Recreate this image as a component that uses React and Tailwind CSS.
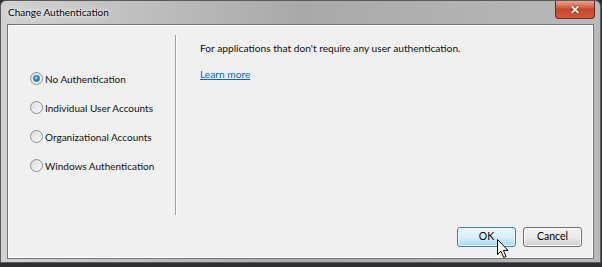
import React from 'react';

const options = [
  'No Authentication',
  'Individual User Accounts',
  'Organizational Accounts',
  'Windows Authentication',
];

const Radio = ({ checked }) => (
  <span className="flex items-center justify-center w-[13px] h-[13px] rounded-full border border-[#8e8f8f] bg-gradient-to-br from-[#dcdcdc] to-[#fbfbfb] shrink-0">
    {checked && (
      <span className="w-[7px] h-[7px] rounded-full bg-[radial-gradient(circle_at_40%_35%,#9fe0ff,#1b8bd4_55%,#0c5a9a)] border border-[#2a6e9f]" />
    )}
  </span>
);

const Cursor = () => (
  <svg width="13" height="20" viewBox="0 0 13 20" className="absolute left-[497px] top-[239px]">
    <path d="M0.5 0.5 L0.5 15.5 L4 12.2 L6.6 18.5 L9 17.5 L6.4 11.4 L11 11.4 Z" fill="#fff" stroke="#000" strokeWidth="1" strokeLinejoin="miter" />
  </svg>
);

export default function App() {
  return (
    <div className="relative w-[602px] h-[267px] bg-[#2e2f31] overflow-hidden" style={{ fontFamily: 'Lato, "Open Sans", sans-serif' }}>
      <div className="w-[601px] h-[263px] rounded-t-[6px] border border-[#5a5a5a] bg-gradient-to-r from-[#d2d2d2] via-[#a9a9a9] to-[#b9b9b9] flex flex-col">
        <div className="h-[23px] flex items-start justify-between pl-[7px]">
          <span className="text-[10px] text-black leading-[22px] [text-shadow:0_0_6px_#fff,0_0_3px_#fff]">Change Authentication</span>
          <div className="mr-[5px] w-[40px] h-[18px] rounded-b-[4px] border border-[#6b2a20] border-t-0 bg-gradient-to-b from-[#e8a493] via-[#c9452c] to-[#cf5a3c] flex items-center justify-center">
            <span className="text-white text-[12px] font-bold leading-none [text-shadow:0_0_2px_#400]">✕</span>
          </div>
        </div>
        <div className="mx-[6px] h-[235px] border border-[#747474] bg-[#f0f0f0] shadow-[inset_0_0_0_1px_#ffffff] flex flex-col text-[10px] text-black">
          <div className="flex">
            <div className="w-[167px] pl-[22px] pt-[47px] flex flex-col gap-[16px]">
              {options.map((o, i) => (
                <label key={o} className="flex items-center gap-[2px] h-[13px] leading-none whitespace-nowrap">
                  <Radio checked={i === 0} />
                  <span className="text-[10px] text-[#111]">{o}</span>
                </label>
              ))}
            </div>
            <div className="mt-[10px] h-[180px] w-[2px] border-l border-[#a0a0a0] border-r border-r-white" />
            <div className="pl-[23px] pt-[16px] flex flex-col gap-[11px] text-[10.2px]">
              <p className="leading-[15px] text-[#111]">For applications that don't require any user authentication.</p>
              <a className="leading-[15px] text-[#0066cc] underline">Learn more</a>
            </div>
          </div>
          <div className="mt-auto mb-[11px] mr-[11px] flex justify-end gap-[7px] text-[10.5px]">
            <button className="w-[59px] h-[20px] rounded-[3px] border border-[#3c7fb1] bg-gradient-to-b from-[#eaf6fd] via-[#d9f0fc] to-[#a7d9f5] shadow-[inset_0_0_0_1px_#eaf6fd]">OK</button>
            <button className="w-[59px] h-[20px] rounded-[3px] border border-[#707070] bg-gradient-to-b from-[#f2f2f2] via-[#ebebeb] to-[#cfcfcf] shadow-[inset_0_0_0_1px_#fcfcfc]">Cancel</button>
          </div>
        </div>
      </div>
      <Cursor />
    </div>
  );
}
